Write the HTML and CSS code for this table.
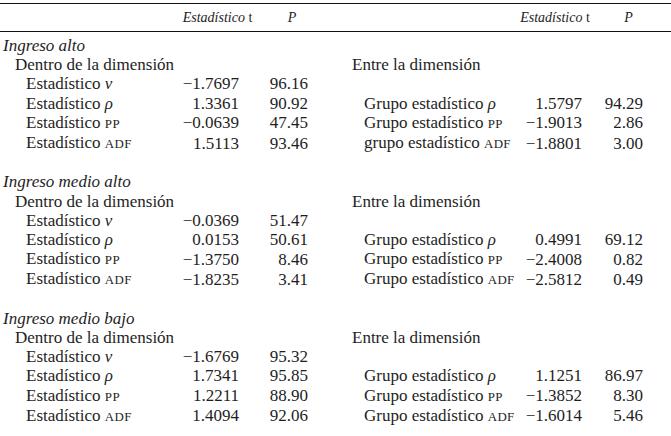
FILE: index.html
```html
<!DOCTYPE html>
<html lang="es">
<head>
<meta charset="utf-8">
<title>Pruebas de cointegración de panel</title>
<link rel="stylesheet" href="styles.css">
</head>
<body>
<table class="stats">
  <colgroup>
    <col class="c-lab">
    <col class="c-t">
    <col class="c-p">
    <col class="c-rlab">
    <col class="c-rt">
    <col class="c-rp">
  </colgroup>
  <thead>
    <tr>
      <th></th>
      <th class="h-t"><i>Estadístico</i> t</th>
      <th class="h-p"><i>P</i></th>
      <th></th>
      <th class="h-rt"><i>Estadístico</i> t</th>
      <th class="h-rp"><i>P</i></th>
    </tr>
  </thead>
  <tbody>
    <tr class="first"><td class="grp" colspan="3">Ingreso alto</td><td></td><td></td><td></td></tr>
    <tr><td class="sub">Dentro de la dimensión</td><td></td><td></td><td class="rsub">Entre la dimensión</td><td></td><td></td></tr>
    <tr><td class="item">Estadístico <i>v</i></td><td class="nt">−1.7697</td><td class="np">96.16</td><td></td><td></td><td></td></tr>
    <tr><td class="item">Estadístico <i>ρ</i></td><td class="nt">1.3361</td><td class="np">90.92</td><td class="ritem">Grupo estadístico <i>ρ</i></td><td class="rnt">1.5797</td><td class="rnp">94.29</td></tr>
    <tr><td class="item">Estadístico <span class="sc">PP</span></td><td class="nt">−0.0639</td><td class="np">47.45</td><td class="ritem">Grupo estadístico <span class="sc">PP</span></td><td class="rnt">−1.9013</td><td class="rnp">2.86</td></tr>
    <tr><td class="item">Estadístico <span class="sc">ADF</span></td><td class="nt">1.5113</td><td class="np">93.46</td><td class="ritem">grupo estadístico <span class="sc">ADF</span></td><td class="rnt">−1.8801</td><td class="rnp">3.00</td></tr>
    <tr class="gap"><td></td><td></td><td></td><td></td><td></td><td></td></tr>

    <tr><td class="grp" colspan="3">Ingreso medio alto</td><td></td><td></td><td></td></tr>
    <tr><td class="sub">Dentro de la dimensión</td><td></td><td></td><td class="rsub">Entre la dimensión</td><td></td><td></td></tr>
    <tr><td class="item">Estadístico <i>v</i></td><td class="nt">−0.0369</td><td class="np">51.47</td><td></td><td></td><td></td></tr>
    <tr><td class="item">Estadístico <i>ρ</i></td><td class="nt">0.0153</td><td class="np">50.61</td><td class="ritem">Grupo estadístico <i>ρ</i></td><td class="rnt">0.4991</td><td class="rnp">69.12</td></tr>
    <tr><td class="item">Estadístico <span class="sc">PP</span></td><td class="nt">−1.3750</td><td class="np">8.46</td><td class="ritem">Grupo estadístico <span class="sc">PP</span></td><td class="rnt">−2.4008</td><td class="rnp">0.82</td></tr>
    <tr><td class="item">Estadístico <span class="sc">ADF</span></td><td class="nt">−1.8235</td><td class="np">3.41</td><td class="ritem">Grupo estadístico <span class="sc">ADF</span></td><td class="rnt">−2.5812</td><td class="rnp">0.49</td></tr>
    <tr class="gap"><td></td><td></td><td></td><td></td><td></td><td></td></tr>

    <tr><td class="grp" colspan="3">Ingreso medio bajo</td><td></td><td></td><td></td></tr>
    <tr><td class="sub">Dentro de la dimensión</td><td></td><td></td><td class="rsub">Entre la dimensión</td><td></td><td></td></tr>
    <tr><td class="item">Estadístico <i>v</i></td><td class="nt">−1.6769</td><td class="np">95.32</td><td></td><td></td><td></td></tr>
    <tr><td class="item">Estadístico <i>ρ</i></td><td class="nt">1.7341</td><td class="np">95.85</td><td class="ritem">Grupo estadístico <i>ρ</i></td><td class="rnt">1.1251</td><td class="rnp">86.97</td></tr>
    <tr><td class="item">Estadístico <span class="sc">PP</span></td><td class="nt">1.2211</td><td class="np">88.90</td><td class="ritem">Grupo estadístico <span class="sc">PP</span></td><td class="rnt">−1.3852</td><td class="rnp">8.30</td></tr>
    <tr class="last"><td class="item">Estadístico <span class="sc">ADF</span></td><td class="nt">1.4094</td><td class="np">92.06</td><td class="ritem">Grupo estadístico <span class="sc">ADF</span></td><td class="rnt">−1.6014</td><td class="rnp">5.46</td></tr>
  </tbody>
</table>
<p class="note">Fuente: elaboración propia con base en datos del Banco Mundial, Indicadores del desarrollo mundial.</p>
</body>
</html>
```
FILE: styles.css
```css
html, body {
  margin: 0;
  padding: 0;
  background: #ffffff;
}

body {
  font-family: "Liberation Serif", "Times New Roman", serif;
  color: #1e1e1e;
  overflow: hidden;
}

.stats {
  width: 671px;
  margin-top: 3px;
  border-collapse: collapse;
  table-layout: fixed;
  font-size: 17px;
}

.c-lab { width: 180px; }
.c-t { width: 75px; }
.c-p { width: 65px; }
.c-rlab { width: 190px; }
.c-rt { width: 90px; }
.c-rp { width: 71px; }

.stats thead th {
  height: 27px;
  padding: 0;
  border-top: 1px solid #111;
  border-bottom: 1px solid #111;
  font-weight: normal;
  font-size: 14px;
  text-align: center;
  white-space: nowrap;
}

.stats thead .h-t { padding-left: 0; }
.stats thead .h-p { padding-left: 9px; }
.stats thead .h-rt { padding-left: 0; }
.stats thead .h-rp { padding-right: 14px; }

.stats tbody td {
  padding: 0;
  height: 19.2px;
  line-height: 19.2px;
  white-space: nowrap;
  vertical-align: middle;
}

.stats tbody tr.first td { padding-top: 4px; }
.stats tbody tr.last td {
  padding-bottom: 13px;
  border-bottom: 1px solid #111;
}

.grp { font-style: italic; padding-left: 3px !important; }
.sub { padding-left: 15px !important; }
.item { padding-left: 26px !important; }
.rsub { padding-left: 32px !important; }
.ritem { padding-left: 44px !important; overflow: visible; }

.nt { text-align: right; padding-right: 16px !important; }
.np { text-align: right; padding-right: 12px !important; }
.rnt { text-align: right; padding-right: 18px !important; }
.rnp { text-align: right; padding-right: 28px !important; }

.sc {
  font-size: 0.76em;
  letter-spacing: 0.03em;
}

.note {
  margin: -2px 0 0 0;
  padding-left: 40px;
  font-size: 15px;
  line-height: 17px;
}
```
